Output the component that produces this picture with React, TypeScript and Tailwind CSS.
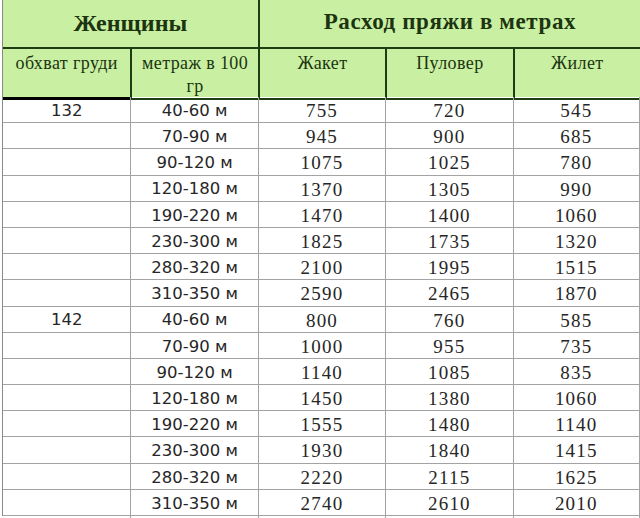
const rows: string[][] = [
  ["132", "40-60 м", "755", "720", "545"],
  ["", "70-90 м", "945", "900", "685"],
  ["", "90-120 м", "1075", "1025", "780"],
  ["", "120-180 м", "1370", "1305", "990"],
  ["", "190-220 м", "1470", "1400", "1060"],
  ["", "230-300 м", "1825", "1735", "1320"],
  ["", "280-320 м", "2100", "1995", "1515"],
  ["", "310-350 м", "2590", "2465", "1870"],
  ["142", "40-60 м", "800", "760", "585"],
  ["", "70-90 м", "1000", "955", "735"],
  ["", "90-120 м", "1140", "1085", "835"],
  ["", "120-180 м", "1450", "1380", "1060"],
  ["", "190-220 м", "1555", "1480", "1140"],
  ["", "230-300 м", "1930", "1840", "1415"],
  ["", "280-320 м", "2220", "2115", "1625"],
  ["", "310-350 м", "2740", "2610", "2010"],
];

const serif = "font-['Liberation_Serif',serif]";
const sans = "font-['DejaVu_Sans',sans-serif]";

export default function App() {
  return (
    <div className="w-[640px] h-[518px] overflow-hidden bg-white pl-[2px]">
      <div className="border-l border-[#8a8a8a]">
        {/* top header */}
        <div className="grid grid-cols-5 h-[49px] bg-[#c9f0a2] border-b-2 border-[#1f3d12] text-[#1c3410]">
          <div className={`col-span-2 flex items-center justify-center pb-[2px] text-[24px] font-bold ${serif}`}>
            Женщины
          </div>
          <div className={`col-span-3 flex items-center justify-center pb-[2px] border-l-2 border-[#1f3d12] text-[23px] font-bold tracking-[0.6px] ${serif}`}>
            Расход пряжи в метрах
          </div>
        </div>

        {/* column headers */}
        <div className={`grid grid-cols-5 h-[48px] bg-[#c9f0a2] text-[#1c3410] text-[18px] leading-[23px] tracking-[0.4px] ${serif}`}>
          <div className="pt-[3px] text-center border-b-[3px] border-black">обхват груди</div>
          <div className="pt-[3px] text-center border-l-2 border-b-2 border-[#1f3d12]">
            метраж в 100
            <br />
            гр
          </div>
          <div className="pt-[3px] text-center border-l-2 border-b-2 border-[#1f3d12]">Жакет</div>
          <div className="pt-[3px] text-center border-l-2 border-b-2 border-[#1f3d12]">Пуловер</div>
          <div className="pt-[3px] text-center border-l-2 border-b-2 border-[#1f3d12]">Жилет</div>
        </div>

        {/* data */}
        {rows.map((r, i) => (
          <div key={i} className="grid grid-cols-5 h-[26.2px] border-b border-[#a3a3a3] text-[#262626]">
            <div className={`flex items-center justify-center text-[16.5px] ${sans}`}>{r[0]}</div>
            <div className={`flex items-center justify-center border-l border-[#a3a3a3] text-[16.5px] ${sans}`}>{r[1]}</div>
            {r.slice(2).map((v, j) => (
              <div
                key={j}
                className={`flex items-center justify-center border-l border-[#a3a3a3] text-[19px] tracking-[1.2px] ${serif} ${j === 2 ? "border-r" : ""}`}
              >
                {v}
              </div>
            ))}
          </div>
        ))}
      </div>
    </div>
  );
}
